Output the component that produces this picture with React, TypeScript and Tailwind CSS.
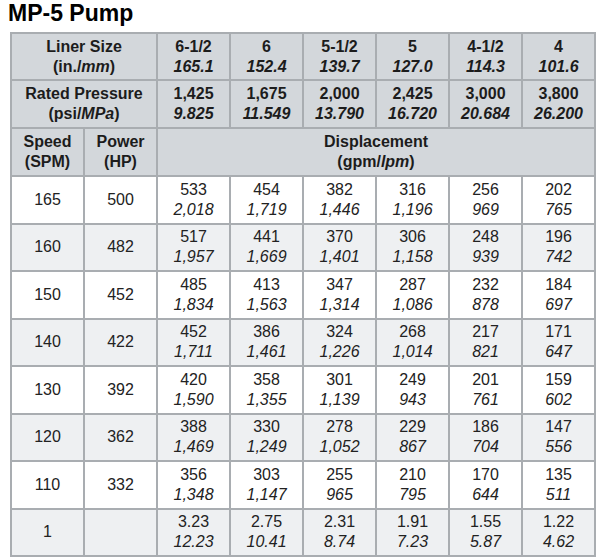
const liners = [
  { size: "6-1/2", mm: "165.1", psi: "1,425", mpa: "9.825" },
  { size: "6", mm: "152.4", psi: "1,675", mpa: "11.549" },
  { size: "5-1/2", mm: "139.7", psi: "2,000", mpa: "13.790" },
  { size: "5", mm: "127.0", psi: "2,425", mpa: "16.720" },
  { size: "4-1/2", mm: "114.3", psi: "3,000", mpa: "20.684" },
  { size: "4", mm: "101.6", psi: "3,800", mpa: "26.200" },
];

const rows: { spm: string; hp: string; vals: [string, string][] }[] = [
  { spm: "165", hp: "500", vals: [["533", "2,018"], ["454", "1,719"], ["382", "1,446"], ["316", "1,196"], ["256", "969"], ["202", "765"]] },
  { spm: "160", hp: "482", vals: [["517", "1,957"], ["441", "1,669"], ["370", "1,401"], ["306", "1,158"], ["248", "939"], ["196", "742"]] },
  { spm: "150", hp: "452", vals: [["485", "1,834"], ["413", "1,563"], ["347", "1,314"], ["287", "1,086"], ["232", "878"], ["184", "697"]] },
  { spm: "140", hp: "422", vals: [["452", "1,711"], ["386", "1,461"], ["324", "1,226"], ["268", "1,014"], ["217", "821"], ["171", "647"]] },
  { spm: "130", hp: "392", vals: [["420", "1,590"], ["358", "1,355"], ["301", "1,139"], ["249", "943"], ["201", "761"], ["159", "602"]] },
  { spm: "120", hp: "362", vals: [["388", "1,469"], ["330", "1,249"], ["278", "1,052"], ["229", "867"], ["186", "704"], ["147", "556"]] },
  { spm: "110", hp: "332", vals: [["356", "1,348"], ["303", "1,147"], ["255", "965"], ["210", "795"], ["170", "644"], ["135", "511"]] },
  { spm: "1", hp: "", vals: [["3.23", "12.23"], ["2.75", "10.41"], ["2.31", "8.74"], ["1.91", "7.23"], ["1.55", "5.87"], ["1.22", "4.62"]] },
];

const cell = "border-2 border-[#a9adb1] text-center align-middle p-0 leading-[20px]";
const head = `${cell} bg-[#d3d7db] font-bold text-[#1c1c1c]`;

export default function App() {
  return (
    <div className="bg-white w-[600px] h-[560px] px-[10px] text-[16px] text-[#222]" style={{ fontFamily: '"Liberation Sans", Arial, sans-serif' }}>
      <h1 className="text-[23px] font-bold text-black leading-[26px] -ml-[2px] h-[32px]">MP-5 Pump</h1>
      <table className="border-collapse table-fixed w-[584px]">
        <colgroup>
          {Array.from({ length: 8 }).map((_, i) => (
            <col key={i} className="w-[73px]" />
          ))}
        </colgroup>
        <tbody>
          <tr className="h-[47px]">
            <td colSpan={2} className={head}>
              Liner Size
              <br />
              (in./<i>mm</i>)
            </td>
            {liners.map((l) => (
              <td key={l.size} className={head}>
                {l.size}
                <br />
                <i>{l.mm}</i>
              </td>
            ))}
          </tr>
          <tr className="h-[48px]">
            <td colSpan={2} className={head}>
              Rated Pressure
              <br />
              (psi/<i>MPa</i>)
            </td>
            {liners.map((l) => (
              <td key={l.size} className={head}>
                {l.psi}
                <br />
                <i>{l.mpa}</i>
              </td>
            ))}
          </tr>
          <tr className="h-[48px]">
            <td className={head}>
              Speed
              <br />
              (SPM)
            </td>
            <td className={head}>
              Power
              <br />
              (HP)
            </td>
            <td colSpan={6} className={head}>
              Displacement
              <br />
              (gpm/<i>lpm</i>)
            </td>
          </tr>
          {rows.map((r, i) => (
            <tr key={r.spm} className={`h-[47.5px] ${i % 2 === 1 ? "bg-[#eef0f2]" : "bg-white"}`}>
              <td className={cell}>{r.spm}</td>
              <td className={cell}>{r.hp}</td>
              {r.vals.map(([a, b], j) => (
                <td key={j} className={cell}>
                  {a}
                  <br />
                  <i>{b}</i>
                </td>
              ))}
            </tr>
          ))}
        </tbody>
      </table>
    </div>
  );
}
